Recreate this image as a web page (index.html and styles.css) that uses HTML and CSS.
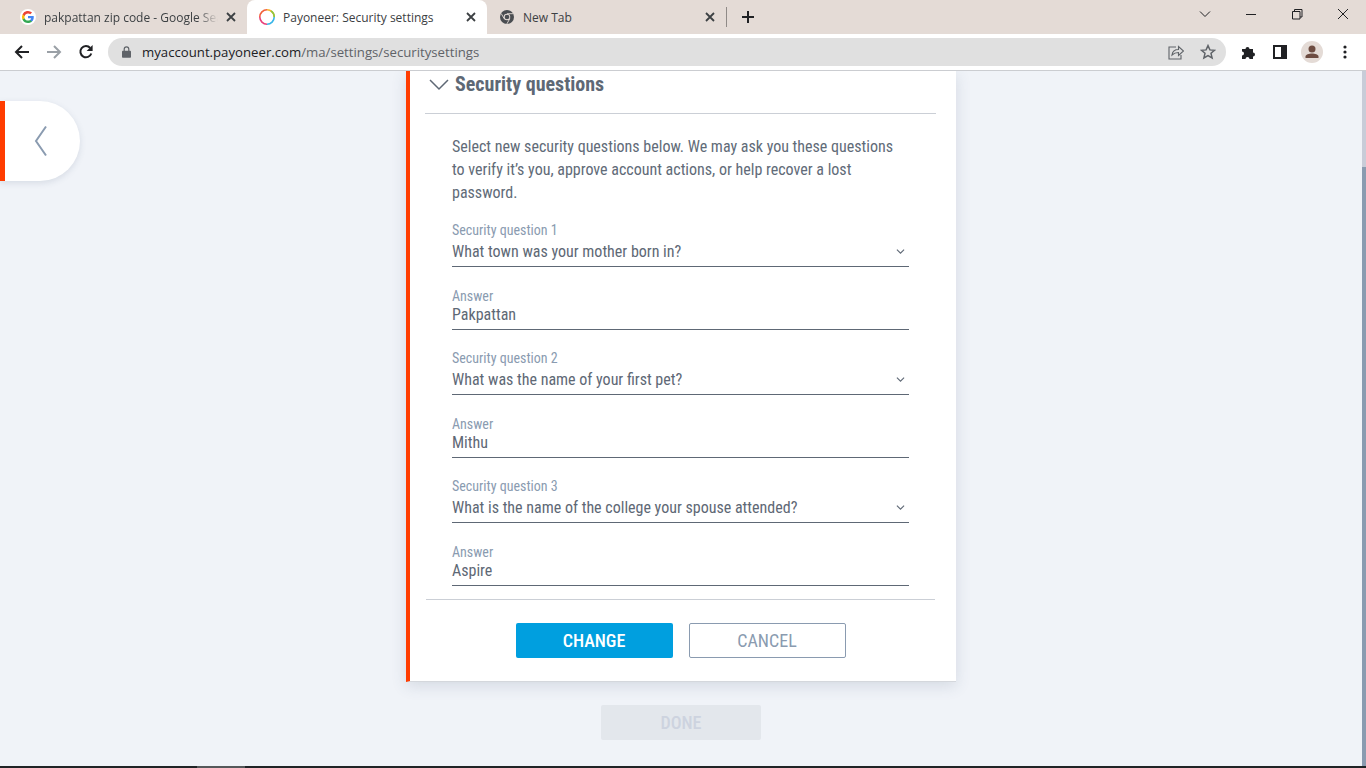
FILE: index.html
```html
<!DOCTYPE html>
<html>
<head>
    <meta charset="UTF-8">
    <title>Payoneer: Security settings</title>
    <link rel="stylesheet" href="styles.css">
</head>
<body>
<div class="tabstrip">
    <div class="tab">
        <svg class="favicon" viewBox="0 0 16 16">
            <circle cx="8" cy="8" r="8" fill="#fff"/>
            <g transform="translate(2 2) scale(.75)">
                <path d="M15.7 8.2c0-.6-.1-1.100-.2-1.600H8v3h4.300a3.700 3.700 0 0 1-1.600 2.400v2h2.600c1.500-1.400 2.400-3.400 2.400-5.800z" fill="#4285f4"/>
                <path d="M8 16c2.200 0 4-.7 5.300-2l-2.600-2c-.7.500-1.600.8-2.700.8-2.100 0-3.900-1.400-4.500-3.300H.8v2.100A8 8 0 0 0 8 16z" fill="#34a853"/>
                <path d="M3.500 9.500a4.800 4.800 0 0 1 0-3V4.400H.8a8 8 0 0 0 0 7.200z" fill="#fbbc05"/>
                <path d="M8 3.200c1.200 0 2.300.4 3.100 1.200l2.300-2.300A8 8 0 0 0 .8 4.400l2.700 2.100C4.100 4.600 5.900 3.200 8 3.200z" fill="#ea4335"/>
            </g>
        </svg>
        <span class="tab-title tab-fade">pakpattan zip code - Google Search</span>
        <svg class="tab-close" viewBox="0 0 10 10"><path d="M1 1l8 8M9 1l-8 8"/></svg>
    </div>
    <div class="tab tab-active">
        <svg class="favicon" viewBox="0 0 16 16" fill="none" stroke-width="1.600">
            <path d="M8 .8A7.200 7.200 0 0 1 15.200 8" stroke="#f7b32b"/>
            <path d="M15.200 8A7.200 7.200 0 0 1 8 15.200" stroke="#37b5e8"/>
            <path d="M8 15.200A7.200 7.200 0 0 1 .8 8" stroke="#e8407a"/>
            <path d="M.8 8A7.200 7.200 0 0 1 8 .8" stroke="#f2603a"/>
            <path d="M12 1.900A7.200 7.200 0 0 1 15.200 8" stroke="#8cc63f"/>
        </svg>
        <span class="tab-title">Payoneer: Security settings</span>
        <svg class="tab-close" viewBox="0 0 10 10"><path d="M1 1l8 8M9 1l-8 8"/></svg>
    </div>
    <div class="tab">
        <svg class="favicon" viewBox="0 0 16 16">
            <circle cx="8" cy="8" r="7" fill="#4a4d51"/>
            <circle cx="8" cy="8" r="3.300" fill="#e4dbd6"/>
            <circle cx="8" cy="8" r="2.300" fill="#4a4d51"/>
            <path d="M8 4.700h6M5.200 9.700L2.200 4.500M10.800 9.700L7.800 15" stroke="#e4dbd6" stroke-width=".9"/>
        </svg>
        <span class="tab-title">New Tab</span>
        <svg class="tab-close" viewBox="0 0 10 10"><path d="M1 1l8 8M9 1l-8 8"/></svg>
    </div>
    <div class="tab-sep"></div>
    <svg class="new-tab" viewBox="0 0 12 12"><path d="M6 0v12M0 6h12"/></svg>
    <div class="win-buttons">
        <svg class="win-icon" viewBox="0 0 46 28"><path d="M18 11.500l5 5 5-5"/></svg>
        <svg class="win-icon" viewBox="0 0 46 28"><path d="M18 14.500h10"/></svg>
        <svg class="win-icon" viewBox="0 0 46 28"><path d="M18.500 11.500h7.500v7.500h-7.500zM20.500 11.500v-2h7.500v7.500h-2"/></svg>
        <svg class="win-icon" viewBox="0 0 46 28"><path d="M18 9l10 10M28 9l-10 10"/></svg>
    </div>
</div>
<div class="toolbar">
    <svg class="nav-icon" viewBox="0 0 16 16"><path d="M15 8H2M8 2L2 8l6 6" fill="none" stroke="#202124" stroke-width="2"/></svg>
    <svg class="nav-icon" viewBox="0 0 16 16"><path d="M1 8h13M8 2l6 6-6 6" fill="none" stroke="#9aa0a6" stroke-width="2"/></svg>
    <svg class="nav-icon" viewBox="0 0 16 16"><path d="M13.300 9.500A5.600 5.600 0 1 1 12.200 4" fill="none" stroke="#202124" stroke-width="2"/><path d="M14.600 1v6h-6z" fill="#202124"/></svg>
    <div class="omnibox">
        <svg class="lock" viewBox="0 0 9 12"><path d="M2.200 5V3.200a2.300 2.300 0 0 1 4.600 0V5" fill="none" stroke="#5f6368" stroke-width="1.200"/><rect y="4.800" width="9" height="7" rx=".8" fill="#5f6368"/></svg>
        <span class="url"><b>myaccount.payoneer.com</b>/ma/settings/securitysettings</span>
        <svg class="omni-icon" viewBox="0 0 16 16" fill="none" stroke="#5f6368" stroke-width="1.100"><path d="M8 3H1v12h12v-4"/><path d="M4 11c.5-3.500 3-5.500 6.500-5.500V2.500l5 4.500-5 4.500V8.500C8 8.500 5.800 9.300 4 11z"/></svg>
        <svg class="omni-icon" viewBox="0 0 16 16" fill="none" stroke="#5f6368" stroke-width="1.500"><path d="M8 1.600l1.900 4.300 4.600.4-3.500 3 1.100 4.600L8 11.500l-4.100 2.400L5 9.300l-3.500-3 4.600-.4z"/></svg>
    </div>
    <div class="tool-right">
        <svg class="ext-icon" viewBox="0 0 16 16"><path d="M1 5h3.500a2 2 0 1 1 4 0H12v3.500a2 2 0 1 1 0 4V15H8.500a2 2 0 1 0-4 0H1v-3.500a2 2 0 1 0 0-4z" fill="#202124"/></svg>
        <div class="side-icon"></div>
        <div class="avatar">
            <svg viewBox="0 0 22 22"><circle cx="11" cy="8" r="3.500" fill="#6d4c41"/><path d="M4.500 17v-1.500c0-2 3.500-3 6.500-3s6.500 1 6.500 3V17z" fill="#6d4c41"/></svg>
        </div>
        <svg class="menu-icon" viewBox="0 0 4 16"><circle cx="2" cy="3" r="1.600"/><circle cx="2" cy="8" r="1.600"/><circle cx="2" cy="13" r="1.600"/></svg>
    </div>
</div>
<div class="page">
    <div class="side-tab">
        <svg viewBox="0 0 14 32"><path d="M12 1.500L2 16l10 14.500" fill="none" stroke="#8a9bb0" stroke-width="2"/></svg>
    </div>
    <div class="center">
        <div class="card">
            <div class="card-head">
                <svg class="head-chevron" viewBox="0 0 20 12"><path d="M1 1l9 9 9-9" fill="none" stroke="#5e6875" stroke-width="1.500"/></svg>
                <h2>Security questions</h2>
            </div>
            <div class="card-body">
                <p class="intro">Select new security questions below. We may ask you these questions to verify it’s you, approve account actions, or help recover a lost password.</p>
                <div class="field field-select">
                    <label>Security question 1</label>
                    <div class="value">What town was your mother born in?<svg class="caret" viewBox="0 0 10 6"><path d="M.7.700L5 5 9.300.700"/></svg></div>
                </div>
                <div class="field">
                    <label>Answer</label>
                    <div class="value">Pakpattan</div>
                </div>
                <div class="field field-select">
                    <label>Security question 2</label>
                    <div class="value">What was the name of your first pet?<svg class="caret" viewBox="0 0 10 6"><path d="M.7.700L5 5 9.300.700"/></svg></div>
                </div>
                <div class="field">
                    <label>Answer</label>
                    <div class="value">Mithu</div>
                </div>
                <div class="field field-select">
                    <label>Security question 3</label>
                    <div class="value">What is the name of the college your spouse attended?<svg class="caret" viewBox="0 0 10 6"><path d="M.7.700L5 5 9.300.700"/></svg></div>
                </div>
                <div class="field">
                    <label>Answer</label>
                    <div class="value">Aspire</div>
                </div>
            </div>
            <div class="card-actions">
                <button class="btn btn-primary">CHANGE</button>
                <button class="btn btn-outline">CANCEL</button>
            </div>
        </div>
        <button class="btn btn-done">DONE</button>
    </div>
    <div class="scrollbar"></div>
</div>
<div class="taskbar"><div class="task-item"></div></div>
</body>
</html>
```
FILE: styles.css
```css
* {
    margin: 0;
    padding: 0;
    box-sizing: border-box;
}
html, body {
    height: 100%;
    overflow: hidden;
}
body {
    display: flex;
    flex-direction: column;
    font-family: Roboto, "Liberation Sans", sans-serif;
    background-color: #f0f3f8;
}

/* browser chrome */
.tabstrip {
    height: 34px;
    background-color: #e4dbd6;
    display: flex;
    align-items: flex-end;
    padding-left: 8px;
    flex-shrink: 0;
}
.tab {
    width: 239px;
    height: 34px;
    padding: 0 8px 0 12px;
    display: flex;
    align-items: center;
    font-family: "Open Sans", "Liberation Sans", sans-serif;
    font-size: 12px;
    font-stretch: 92%;
    color: #3c4043;
}
.tab-active {
    width: 240px;
    background-color: #fff;
    border-radius: 8px 8px 0 0;
}
.favicon {
    width: 16px;
    height: 16px;
    flex-shrink: 0;
    margin-right: 8px;
}
.tab-title {
    flex: 1;
    white-space: nowrap;
    overflow: hidden;
}
.tab-fade {
    -webkit-mask-image: linear-gradient(to right, #000 88%, transparent);
    mask-image: linear-gradient(to right, #000 88%, transparent);
}
.tab-close {
    width: 10px;
    height: 10px;
    margin: 0 3px 0 8px;
    flex-shrink: 0;
    fill: none;
    stroke: #3c4043;
    stroke-width: 1.800;
}
.tab-sep {
    width: 1px;
    height: 20px;
    background-color: #8f8a87;
    margin-bottom: 7px;
}
.new-tab {
    width: 12px;
    height: 12px;
    margin: 0 0 11px 15px;
    fill: none;
    stroke: #202124;
    stroke-width: 2;
}
.win-buttons {
    margin-left: auto;
    display: flex;
    align-self: flex-start;
}
.win-icon {
    width: 46px;
    height: 28px;
    fill: none;
    stroke: #202124;
    stroke-width: 1;
}

.toolbar {
    height: 37px;
    background-color: #fff;
    border-bottom: 1px solid #cbcdd1;
    display: flex;
    align-items: center;
    padding-left: 14px;
    flex-shrink: 0;
}
.nav-icon {
    width: 16px;
    height: 16px;
    margin-right: 16px;
    flex-shrink: 0;
}
.omnibox {
    width: 1118px;
    height: 28px;
    margin-left: -2px;
    border-radius: 14px;
    background-color: #e0e0e0;
    display: flex;
    align-items: center;
    padding: 0 10px 0 14px;
}
.lock {
    width: 9px;
    height: 12px;
    margin-right: 11px;
}
.url {
    flex: 1;
    font-family: "Open Sans", "Liberation Sans", sans-serif;
    font-size: 13.2px;
    color: #5f6368;
}
.url b {
    font-weight: 400;
    color: #202124;
}
.omni-icon {
    width: 16px;
    height: 16px;
    margin-left: 16px;
}
.tool-right {
    display: flex;
    align-items: center;
    margin-left: 15px;
}
.ext-icon {
    width: 16px;
    height: 16px;
}
.side-icon {
    width: 14px;
    height: 14px;
    margin-left: 16px;
    border: 2px solid #202124;
    border-right-width: 6px;
}
.avatar {
    width: 22px;
    height: 22px;
    margin-left: 14px;
    border-radius: 50%;
    background-color: #e4dbd6;
}
.avatar svg {
    display: block;
}
.menu-icon {
    width: 4px;
    height: 16px;
    margin-left: 20px;
    fill: #202124;
}

/* page */
.page {
    flex: 1;
    position: relative;
    overflow: hidden;
}
.side-tab {
    position: absolute;
    left: 0;
    top: 30px;
    width: 80px;
    height: 80px;
    background-color: #fff;
    border-left: 5px solid #ff3c00;
    border-radius: 0 40px 40px 0;
    box-shadow: 0 2px 6px rgba(70, 90, 120, .15);
    display: flex;
    align-items: center;
    padding-left: 29px;
}
.side-tab svg {
    width: 14px;
    height: 32px;
}
.center {
    width: 550px;
    margin-left: 406px;
}
.card {
    background-color: #fff;
    border-left: 4px solid #ff3c00;
    border-bottom: 1px solid #d4d7dc;
    box-shadow: 0 4px 14px rgba(70, 90, 120, .16);
    padding: 0 20px 0 16px;
    height: 611px;
}
.card-head {
    height: 43px;
    border-bottom: 1px solid #cbcfd6;
    display: flex;
    align-items: center;
    padding: 0 0 14px 4px;
    margin-left: -1px;
}
.head-chevron {
    width: 20px;
    height: 12px;
    margin-right: 6px;
}
h2 {
    font-size: 20px;
    font-weight: 700;
    color: #5e6875;
    font-stretch: condensed;
    padding-bottom: 2px;
}
.card-body {
    padding: 21px 26px 0;
    height: 486px;
    border-bottom: 1px solid #cbcfd6;
    margin-right: 1px;
}
.intro {
    font-size: 16px;
    line-height: 23px;
    color: #616b78;
    font-stretch: condensed;
    margin-bottom: 15px;
}
.field {
    height: 62px;
    padding-top: 3px;
}
.field-select {
    height: 66px;
}
.field label {
    display: block;
    font-size: 14px;
    line-height: 16px;
    color: #8a9bb0;
    font-stretch: condensed;
}
.value {
    height: 26px;
    padding-bottom: 4px;
    line-height: 21px;
    font-size: 16px;
    color: #5e6875;
    border-bottom: 1px solid #5e6875;
    font-stretch: condensed;
    display: flex;
    align-items: center;
    justify-content: space-between;
}
.field-select .value {
    margin-top: 3px;
}
.caret {
    width: 9px;
    height: 5px;
    margin-right: 4px;
    fill: none;
    stroke: #5e6875;
    stroke-width: 1.300;
}
.card-actions {
    display: flex;
    justify-content: center;
    gap: 16px;
    padding-top: 23px;
    margin-left: -1px;
}
.btn {
    width: 157px;
    height: 35px;
    border-radius: 2px;
    border: 1px solid transparent;
    font-family: Roboto, "Liberation Sans", sans-serif;
    font-size: 18px;
    font-stretch: condensed;
}
.btn-primary {
    background-color: #009fdf;
    color: #fff;
    font-weight: 500;
}
.btn-outline {
    background-color: #fff;
    border-color: #8a9bb0;
    color: #8a9bb0;
}
.btn-done {
    display: block;
    width: 160px;
    margin: 23px 0 0 195px;
    background-color: #e3e7ec;
    color: #cdd3df;
    font-weight: 500;
}
/* the bar: pale above the thumb, thumb fills the rest */
.scrollbar {
    position: absolute;
    top: 0;
    right: 0;
    bottom: 0;
    width: 4px;
    background: linear-gradient(#c8ccd8 96px, #8a9bb0 96px);
}
.taskbar {
    height: 2px;
    background-color: #202326;
    flex-shrink: 0;
}
.task-item {
    width: 48px;
    height: 2px;
    margin-left: 197px;
    background-color: #55585a;
}
```
